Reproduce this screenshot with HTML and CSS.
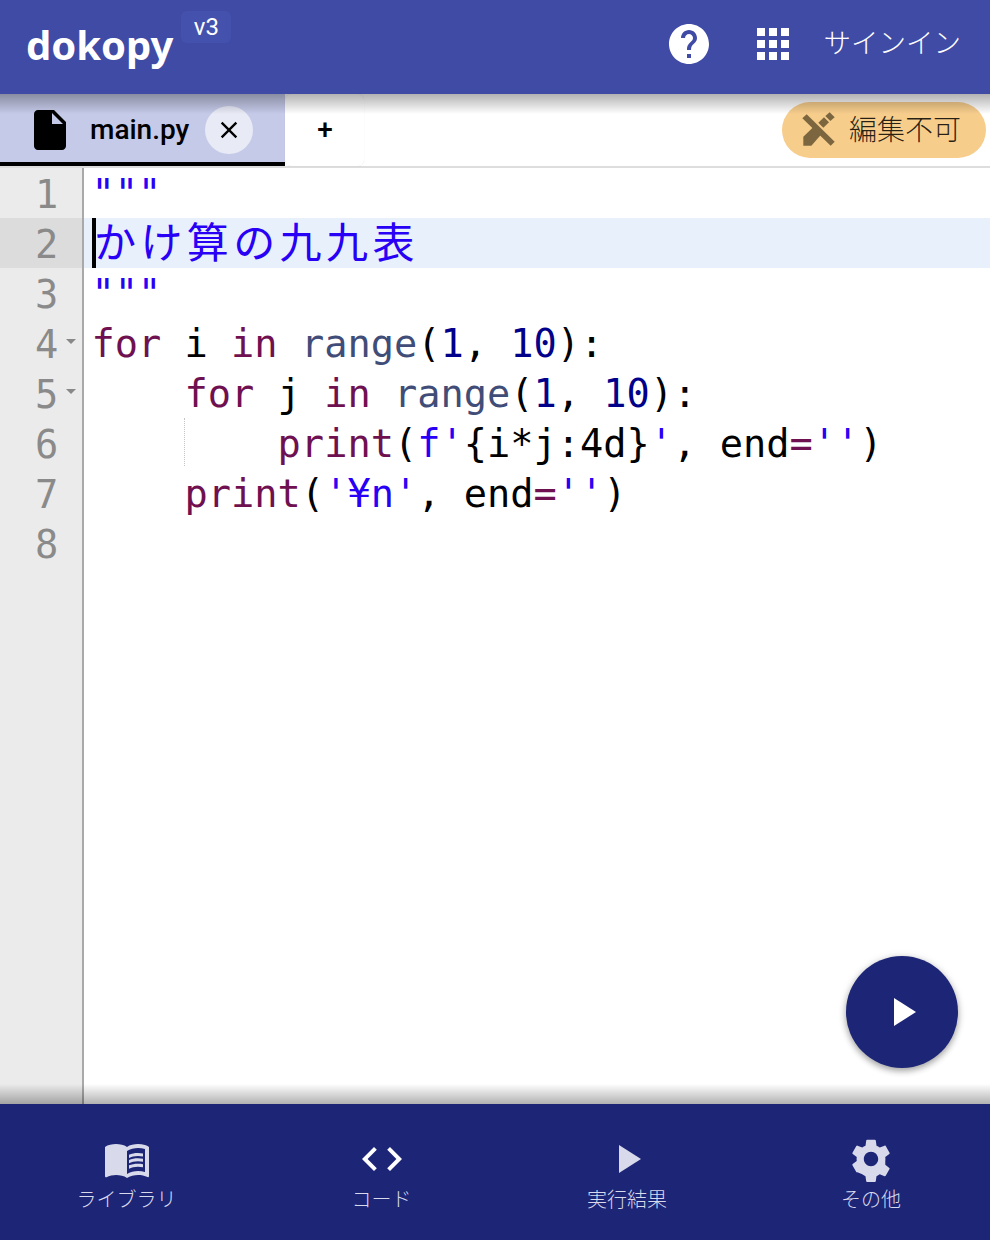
FILE: index.html
```html
<!DOCTYPE html>
<html lang="ja">
<head>
<meta charset="utf-8">
<title>dokopy</title>
<link rel="stylesheet" href="styles.css">
</head>
<body>
<div class="app">
  <header class="header">
    <div class="brand"><span class="logo">dokopy</span><span class="version">v3</span></div>
    <div class="actions">
      <svg class="ic48 white" viewBox="0 0 24 24"><path d="M12 2C6.48 2 2 6.48 2 12s4.48 10 10 10 10-4.48 10-10S17.52 2 12 2zm1 17h-2v-2h2v2zm2.07-7.75l-.9.92C13.45 12.9 13 13.5 13 15h-2v-.5c0-1.1.45-2.1 1.17-2.83l1.24-1.26c.37-.36.59-.86.59-1.41 0-1.1-.9-2-2-2s-2 .9-2 2H8c0-2.21 1.79-4 4-4s4 1.79 4 4c0 .88-.36 1.68-.93 2.25z"/></svg>
      <svg class="ic48 white apps" viewBox="0 0 24 24"><path d="M4 8h4V4H4v4zm6 12h4v-4h-4v4zm-6 0h4v-4H4v4zm0-6h4v-4H4v4zm6 0h4v-4h-4v4zm6-10v4h4V4h-4zm-6 4h4V4h-4v4zm6 6h4v-4h-4v4zm0 6h4v-4h-4v4z"/></svg>
      <span class="signin">サインイン</span>
    </div>
  </header>
  <div class="tabs">
    <div class="tab active">
      <svg class="ic48 black" viewBox="0 0 24 24"><path d="M6 2c-1.1 0-1.99.9-1.99 2L4 20c0 1.1.89 2 1.99 2H18c1.1 0 2-.9 2-2V8l-6-6H6zm7 7V3.5L18.5 9H13z"/></svg>
      <span class="tab-name">main.py</span>
      <span class="close"><svg class="ic28 black" viewBox="0 0 24 24"><path d="M19 6.41L17.59 5 12 10.59 6.41 5 5 6.41 10.59 12 5 17.59 6.41 19 12 13.41 17.59 19 19 17.59 13.41 12z"/></svg></span>
    </div>
    <div class="tab add">+</div>
    <div class="readonly">
      <svg class="pen" viewBox="0 0 150 150"><polygon points="25,40 38,28 122,110 110,122"/><polygon points="28,122 28,95 62,62 85,85 52,122"/><polygon points="73,53 90,37 105,52 88,68"/><polygon points="94,33 107,22 122,37 109,48"/></svg>
      <span>編集不可</span>
    </div>
  </div>
  <main class="editor">
    <div class="gutter">
      <div class="num">1</div>
      <div class="num current">2</div>
      <div class="num">3</div>
      <div class="num fold">4</div>
      <div class="num fold">5</div>
      <div class="num">6</div>
      <div class="num">7</div>
      <div class="num">8</div>
    </div>
    <div class="code">
      <div class="line"><span class="str">"""</span></div>
      <div class="line current"><span class="caret"></span><span class="str cjk">かけ算の九九表</span></div>
      <div class="line"><span class="str">"""</span></div>
      <div class="line"><span class="kw">for</span> i <span class="kw">in</span> <span class="fn">range</span>(<span class="n">1</span>, <span class="n">10</span>):</div>
      <div class="line">    <span class="kw">for</span> j <span class="kw">in</span> <span class="fn">range</span>(<span class="n">1</span>, <span class="n">10</span>):</div>
      <div class="line guide">        <span class="kw">print</span>(<span class="str">f'</span>{i*j:4d}<span class="str">'</span>, end<span class="kw">=</span><span class="str">''</span>)</div>
      <div class="line">    <span class="kw">print</span>(<span class="str">'¥n'</span>, end<span class="kw">=</span><span class="str">''</span>)</div>
      <div class="line"></div>
    </div>
    <button class="fab"><svg class="ic48 white" viewBox="0 0 24 24"><path d="M8 5v14l11-7z"/></svg></button>
  </main>
  <nav class="nav">
    <div class="nav-item">
      <svg class="ic48" viewBox="0 0 24 24"><path d="M21 5c-1.11-.35-2.33-.5-3.5-.5-1.95 0-4.05.4-5.5 1.5-1.45-1.1-3.55-1.5-5.5-1.5S2.45 4.9 1 6v14.65c0 .25.25.5.5.5.1 0 .15-.05.25-.05C3.1 20.45 5.05 20 6.5 20c1.95 0 4.05.4 5.5 1.5 1.35-.85 3.8-1.5 5.5-1.5 1.65 0 3.35.3 4.75 1.05.1.05.15.05.25.05.25 0 .5-.25.5-.5V6c-.6-.45-1.25-.75-2-1zm0 13.5c-1.1-.35-2.3-.5-3.5-.5-1.7 0-4.15.65-5.5 1.5V8c1.35-.85 3.8-1.5 5.5-1.5 1.2 0 2.4.15 3.5.5v11.5z"/><path d="M17.5 10.5c.88 0 1.73.09 2.5.26V9.24c-.79-.15-1.64-.24-2.5-.24-1.7 0-3.24.29-4.5.83v1.66c1.13-.64 2.7-.99 4.5-.99zM13 12.49v1.66c1.13-.64 2.7-.99 4.5-.99.88 0 1.73.09 2.5.26V11.9c-.79-.15-1.64-.24-2.5-.24-1.7 0-3.24.3-4.5.83zM17.5 14.33c-1.7 0-3.24.29-4.5.83v1.66c1.13-.64 2.7-.99 4.5-.99.88 0 1.73.09 2.5.26v-1.52c-.79-.16-1.64-.24-2.5-.24z"/></svg>
      <span class="nav-label">ライブラリ</span>
    </div>
    <div class="nav-item on">
      <svg class="ic48" viewBox="0 0 24 24"><path d="M9.4 16.6L4.8 12l4.6-4.6L8 6l-6 6 6 6 1.4-1.4zm5.2 0l4.6-4.6-4.6-4.6L16 6l6 6-6 6-1.4-1.4z"/></svg>
      <span class="nav-label">コード</span>
    </div>
    <div class="nav-item">
      <svg class="ic48" viewBox="0 0 24 24"><path d="M8 5v14l11-7z"/></svg>
      <span class="nav-label">実行結果</span>
    </div>
    <div class="nav-item last">
      <svg class="ic48" viewBox="0 0 24 24"><path d="M19.14 12.94c.04-.3.06-.61.06-.94 0-.32-.02-.64-.07-.94l2.03-1.58c.18-.14.23-.41.12-.61l-1.92-3.32c-.12-.22-.37-.29-.59-.22l-2.39.96c-.5-.38-1.03-.7-1.62-.94l-.36-2.54c-.04-.24-.24-.41-.48-.41h-3.84c-.24 0-.43.17-.47.41l-.36 2.54c-.59.24-1.13.57-1.62.94l-2.39-.96c-.22-.08-.47 0-.59.22L2.74 8.87c-.12.21-.08.47.12.61l2.03 1.58c-.05.3-.09.63-.09.94s.02.64.07.94l-2.03 1.58c-.18.14-.23.41-.12.61l1.92 3.32c.12.22.37.29.59.22l2.39.96c.5.38 1.03.7 1.62.94l.36 2.54c.05.24.24.41.48.41h3.84c.24 0 .44-.17.47-.41l.36-2.54c.59-.24 1.13-.56 1.62-.94l2.39.96c.22.08.47 0 .59-.22l1.92-3.32c.12-.22.07-.47-.12-.61l-2.01-1.58zM12 15.6c-1.98 0-3.6-1.62-3.6-3.6s1.62-3.6 3.6-3.6 3.6 1.62 3.6 3.6-1.62 3.6-3.6 3.6z"/></svg>
      <span class="nav-label">その他</span>
    </div>
  </nav>
</div>
</body>
</html>
```
FILE: styles.css
```css
* { box-sizing: border-box; }
html, body { margin: 0; padding: 0; height: 100%; }
body { font-family: Roboto, "Noto Sans CJK JP", sans-serif; background: #fff; }
.app { position: relative; width: 990px; height: 1240px; display: flex; flex-direction: column; overflow: hidden; }

.ic48 { width: 48px; height: 48px; display: block; flex: none; }
.ic28 { width: 28px; height: 28px; display: block; }
.white { fill: #fff; }
.black { fill: #000; }

.header { height: 94px; flex: none; background: #3f4ba5; display: flex; justify-content: space-between; position: relative; color: #fff; }
.brand { display: flex; align-items: flex-start; padding-left: 26px; }
.logo { font-family: "Noto Sans", sans-serif; font-weight: 700; font-size: 40px; line-height: 48px; margin-top: 21px; }
.version { margin: 11px 0 0 8px; width: 50px; height: 32px; border-radius: 6px; background: #4552ad; font-size: 24px; line-height: 32px; text-align: center; }
.actions { display: flex; align-items: center; padding-right: 29px; margin-top: -6px; }
.apps { margin-left: 36px; }
.signin { margin: 0 0 6px 27px; font-family: "Noto Sans CJK JP", sans-serif; font-weight: 300; font-size: 27.5px; line-height: 40px; }

.tabs { height: 74px; flex: none; display: flex; align-items: flex-start; border-bottom: 2px solid #ddd; position: relative; }
.tabs::before { content: ""; position: absolute; left: 0; right: 0; top: 0; height: 20px; background: linear-gradient(rgba(0,0,0,.3), rgba(0,0,0,.03) 90%, rgba(0,0,0,0)); z-index: 3; pointer-events: none; }
.tab { height: 72px; display: flex; align-items: center; }
.tab.active { width: 285px; background: #c5cae9; box-shadow: inset 0 -4px 0 #000; padding: 0 0 0 26px; }
.tab-name { font-weight: 500; font-size: 28px; margin: 0 0 2px 16px; }
.close { width: 48px; height: 48px; border-radius: 50%; background: #e8eaf6; margin-left: 16px; display: flex; align-items: center; justify-content: center; }
.tab.add { width: 79px; justify-content: center; font-size: 28px; font-weight: 500; border-radius: 6px; background: #fff; box-shadow: 0 0 1px rgba(0,0,0,.15); padding: 0 0 2px 1px; }
.readonly { margin: 8px 4px 0 auto; width: 204px; height: 56px; border-radius: 28px; background: #f7cd8c; display: flex; align-items: center; padding-left: 12px; color: rgba(0,0,0,.85); font-family: "Noto Sans CJK JP", sans-serif; font-weight: 300; font-size: 28px; }
.readonly span { margin: 0 0 5px 5px; white-space: nowrap; }
.pen { width: 50px; height: 50px; fill: #7b663f; flex: none; }

.editor { flex: 1; display: flex; position: relative; font-family: "DejaVu Sans Mono", monospace; font-size: 38.65px; line-height: 50px; min-height: 0; }
.editor::after { content: ""; position: absolute; left: 0; right: 0; bottom: 0; height: 20px; background: linear-gradient(rgba(0,0,0,0), rgba(0,0,0,.03) 10%, rgba(0,0,0,.3)); pointer-events: none; }
.gutter { width: 84px; flex: none; background: #ebebeb; border-right: 2px solid #a9a9a9; color: #8a8a8a; }
.num { height: 50px; padding-left: 35px; position: relative; line-height: 53px; }
.num.current { background: #dcdcdc; }
.num.fold::after { content: ""; position: absolute; left: 66px; top: 21px; border: 5px solid transparent; border-top: 5px solid #888; border-bottom: 0; }
.code { flex: 1; min-width: 0; }
.line { height: 50px; padding-left: 7.5px; white-space: pre; color: #000; position: relative; line-height: 52px; }
.line.current { background: #e8f0fc; line-height: 44px; }
.caret { position: absolute; left: 8px; top: 0; width: 4px; height: 50px; background: #000; }
.guide::before { content: ""; position: absolute; left: 100px; top: 0; height: 48px; border-left: 1px dotted #c4c4c4; }
.str { color: #2800f5; }
.cjk { font-family: "Noto Sans CJK JP", sans-serif; font-weight: 400; font-size: 42px; letter-spacing: 4.4px; margin-left: 2.5px; }
.kw { color: #6f1151; }
.fn { color: #3f4d78; }
.n { color: #00008b; }
.fab { position: absolute; right: 32px; bottom: 36px; width: 112px; height: 112px; border: 0; border-radius: 50%; padding: 0; background: #1d2577; display: flex; align-items: center; justify-content: center; box-shadow: 0 3px 6px rgba(0,0,0,.3), 0 1px 10px rgba(0,0,0,.12); z-index: 2; }

.nav { height: 136px; flex: none; background: #1d2577; display: grid; grid-template-columns: 253px 257px 234px 1fr; }
.nav-item { display: flex; flex-direction: column; align-items: center; padding-top: 31px; fill: #d8daeb; color: #d8daeb; }
.nav-item.on { fill: #fff; }
.nav-item.last { padding-left: 8px; }
.nav-label { font-family: "Noto Sans CJK JP", sans-serif; font-weight: 300; font-size: 20px; line-height: 28px; margin-top: 2px; white-space: nowrap; }
```
